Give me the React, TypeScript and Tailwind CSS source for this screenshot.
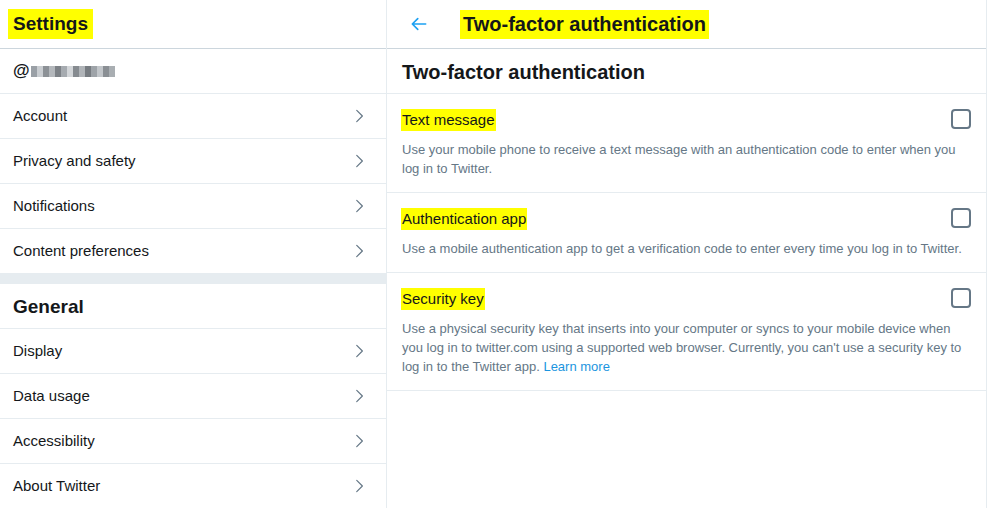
import React from "react"

const font = { fontFamily: '"Liberation Sans", Arial, sans-serif' }

const blur = ["#9aa0a6", "#c9cdd1", "#8c9196", "#b4b8bc", "#7d8287", "#a6abb0", "#d3d6d9", "#868b90", "#b0b4b8", "#777c81", "#9ea3a8", "#c2c6ca", "#8a8f94", "#a9aeb2"]

const Chevron = () => (
    <svg width="18" height="18" viewBox="0 0 24 24" className="text-[#657786]">
        <path d="M9 4.5 L16.5 12 L9 19.5" fill="none" stroke="currentColor" strokeWidth="1.6" strokeLinecap="round" strokeLinejoin="round" />
    </svg>
)

const Row = ({ label }: any) => (
    <div className="flex shrink-0 items-center justify-between h-[45px] border-b border-[#e6ecf0] pl-[13px] pr-[18px]">
        <span className="text-[15px] text-[#14171a]">{label}</span>
        <Chevron />
    </div>
)

const Option = ({ title, children }: any) => (
    <div className="border-b border-[#e6ecf0] pl-[15px] pr-[15px] pt-[15px] pb-[14px]">
        <div className="flex items-start justify-between">
            <span className="bg-[#ffff00] text-[15px] leading-[22px] text-[#14171a] px-[1px] -ml-[1px]">{title}</span>
            <div className="w-[20px] h-[20px] rounded-[4px] border-2 border-[#657786]"></div>
        </div>
        <p className="mt-[9px] text-[13px] leading-[19px] text-[#657786] pr-[9px]">{children}</p>
    </div>
)

export default function App() {
    return (
        <div className="flex w-[990px] h-[508px] bg-white overflow-hidden" style={font}>
            <div className="w-[387px] shrink-0 border-r border-[#e6ecf0] flex flex-col overflow-hidden">
                <div className="h-[49px] shrink-0 border-b border-[#ccd6dd] flex items-center pl-[8px]">
                    <span className="bg-[#ffff00] text-[19px] font-extrabold text-[#14171a] px-[5px] leading-[30px]">Settings</span>
                </div>
                <div className="h-[45px] shrink-0 border-b border-[#e6ecf0] flex items-center pl-[13px]">
                    <span className="text-[17px] font-bold text-[#14171a]">@</span>
                    <span className="flex h-[11px] ml-[1px] mt-[1px]">
                        {blur.map((c, i) => (
                            <span key={i} className="w-[6px] h-full" style={{ backgroundColor: c }}></span>
                        ))}
                    </span>
                </div>
                <Row label="Account" />
                <Row label="Privacy and safety" />
                <Row label="Notifications" />
                <Row label="Content preferences" />
                <div className="h-[10px] shrink-0 bg-[#e6ecf0]"></div>
                <div className="h-[45px] shrink-0 border-b border-[#e6ecf0] flex items-center pl-[13px] pt-[2px]">
                    <span className="text-[19px] font-extrabold text-[#14171a]">General</span>
                </div>
                <Row label="Display" />
                <Row label="Data usage" />
                <Row label="Accessibility" />
                <Row label="About Twitter" />
            </div>
            <div className="w-[600px] shrink-0 border-r border-[#e6ecf0] flex flex-col">
                <div className="h-[49px] shrink-0 border-b border-[#ccd6dd] flex items-center">
                    <div className="w-[73px] flex items-center pl-[22px]">
                        <svg width="20" height="20" viewBox="0 0 24 24" className="text-[#1da1f2]">
                            <path d="M20 12 H4.5 M10.5 5.5 L4 12 L10.5 18.5" fill="none" stroke="currentColor" strokeWidth="2" strokeLinecap="round" strokeLinejoin="round" />
                        </svg>
                    </div>
                    <span className="bg-[#ffff00] text-[20px] font-extrabold text-[#14171a] px-[3px] leading-[29px]">Two-factor authentication</span>
                </div>
                <div className="h-[45px] shrink-0 border-b border-[#e6ecf0] flex items-center pl-[15px] pt-[2px]">
                    <span className="text-[20px] font-extrabold text-[#14171a]">Two-factor authentication</span>
                </div>
                <Option title="Text message">
                    Use your mobile phone to receive a text message with an authentication code to enter when you log in to Twitter.
                </Option>
                <Option title="Authentication app">
                    Use a mobile authentication app to get a verification code to enter every time you log in to Twitter.
                </Option>
                <Option title="Security key">
                    Use a physical security key that inserts into your computer or syncs to your mobile device when you log in to twitter.com using a supported web browser. Currently, you can't use a security key to log in to the Twitter app. <span className="text-[#1b95e0]">Learn more</span>
                </Option>
            </div>
        </div>
    )
}
